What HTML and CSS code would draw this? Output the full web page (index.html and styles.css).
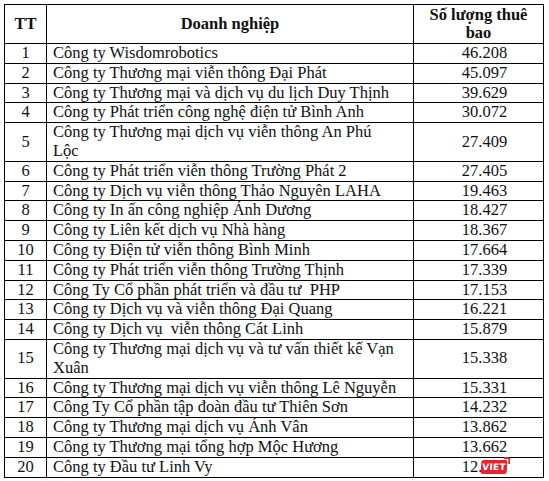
FILE: index.html
```html
<!DOCTYPE html>
<html lang="vi">
<head>
<meta charset="utf-8">
<title>Số lượng thuê bao</title>
<link rel="stylesheet" href="styles.css">
</head>
<body>
<div class="wrap">
<table class="tbl">
  <colgroup>
    <col class="c-tt">
    <col class="c-name">
    <col class="c-num">
  </colgroup>
  <thead>
    <tr class="head">
      <th>TT</th>
      <th>Doanh nghiệp</th>
      <th>Số lượng thuê bao</th>
    </tr>
  </thead>
  <tbody>
    <tr><td class="tt">1</td><td class="name">Công ty Wisdomrobotics</td><td class="num">46.208</td></tr>
    <tr><td class="tt">2</td><td class="name">Công ty Thương mại viễn thông Đại Phát</td><td class="num">45.097</td></tr>
    <tr><td class="tt">3</td><td class="name">Công ty Thương mại và dịch vụ du lịch Duy Thịnh</td><td class="num">39.629</td></tr>
    <tr><td class="tt">4</td><td class="name">Công ty Phát triển công nghệ điện tử Bình Anh</td><td class="num">30.072</td></tr>
    <tr><td class="tt">5</td><td class="name">Công ty Thương mại dịch vụ viễn thông An Phú<br>Lộc</td><td class="num">27.409</td></tr>
    <tr><td class="tt">6</td><td class="name">Công ty Phát triển viễn thông Trường Phát 2</td><td class="num">27.405</td></tr>
    <tr><td class="tt">7</td><td class="name">Công ty Dịch vụ viễn thông Thảo Nguyên LAHA</td><td class="num">19.463</td></tr>
    <tr><td class="tt">8</td><td class="name">Công ty In ấn công nghiệp Ánh Dương</td><td class="num">18.427</td></tr>
    <tr><td class="tt">9</td><td class="name">Công ty Liên kết dịch vụ Nhà hàng</td><td class="num">18.367</td></tr>
    <tr><td class="tt">10</td><td class="name">Công ty Điện tử viễn thông Bình Minh</td><td class="num">17.664</td></tr>
    <tr><td class="tt">11</td><td class="name">Công ty Phát triển viễn thông Trường Thịnh</td><td class="num">17.339</td></tr>
    <tr><td class="tt">12</td><td class="name">Công Ty Cổ phần phát triển và đầu tư&nbsp; PHP</td><td class="num">17.153</td></tr>
    <tr><td class="tt">13</td><td class="name">Công ty Dịch vụ và viễn thông Đại Quang</td><td class="num">16.221</td></tr>
    <tr><td class="tt">14</td><td class="name">Công ty Dịch vụ&nbsp; viễn thông Cát Linh</td><td class="num">15.879</td></tr>
    <tr><td class="tt">15</td><td class="name">Công ty Thương mại dịch vụ và tư vấn thiết kế Vạn<br>Xuân</td><td class="num">15.338</td></tr>
    <tr><td class="tt">16</td><td class="name">Công ty Thương mại dịch vụ viễn thông Lê Nguyễn</td><td class="num">15.331</td></tr>
    <tr><td class="tt">17</td><td class="name">Công Ty Cổ phần tập đoàn đầu tư Thiên Sơn</td><td class="num">14.232</td></tr>
    <tr><td class="tt">18</td><td class="name">Công ty Thương mại dịch vụ Ánh Vân</td><td class="num">13.862</td></tr>
    <tr><td class="tt">19</td><td class="name">Công ty Thương mại tổng hợp Mộc Hương</td><td class="num">13.662</td></tr>
    <tr><td class="tt">20</td><td class="name">Công ty Đầu tư Linh Vy</td><td class="num">12.200</td></tr>
  </tbody>
</table>
<div class="badge">VIET</div>
</div>
</body>
</html>
```

FILE: styles.css
```css
html, body {
  margin: 0;
  padding: 0;
  background: #ffffff;
}

.wrap {
  position: relative;
  padding: 4px 0 0 4px;
}

.tbl {
  border-collapse: collapse;
  table-layout: fixed;
  width: 539px;
  font-family: "Liberation Serif", "Times New Roman", serif;
  font-size: 16.5px;
  color: #111;
}

.c-tt { width: 42px; }
.c-name { width: 367px; }
.c-num { width: 130px; }

.tbl th,
.tbl td {
  border: 1px solid #000;
  padding: 0;
  line-height: 18.8px;
  vertical-align: middle;
}

.head th {
  height: 38px;
  font-weight: bold;
  text-align: center;
  line-height: 18.5px;
}

.head th:last-child {
  padding: 0 6px;
}

.tt {
  text-align: center;
}

.tbl .name {
  text-align: left;
  padding-left: 6px;
  padding-right: 7px;
}

.tbl .num {
  text-align: center;
  padding-left: 12px;
}

.badge {
  position: absolute;
  left: 481px;
  top: 460px;
  width: 26px;
  height: 14px;
  background: #e3262e;
  color: #fff;
  font-family: "DejaVu Sans", sans-serif;
  font-weight: bold;
  font-size: 9px;
  line-height: 14px;
  text-align: center;
  border-radius: 2px;
  transform: skewX(-4deg);
  letter-spacing: 0.2px;
  z-index: 2;
}

.badge::after {
  content: "";
  position: absolute;
  right: -3px;
  top: -3px;
  width: 5px;
  height: 5px;
  border-top: 2px solid #e3262e;
  border-right: 2px solid #e3262e;
  border-radius: 0 3px 0 0;
}
```
